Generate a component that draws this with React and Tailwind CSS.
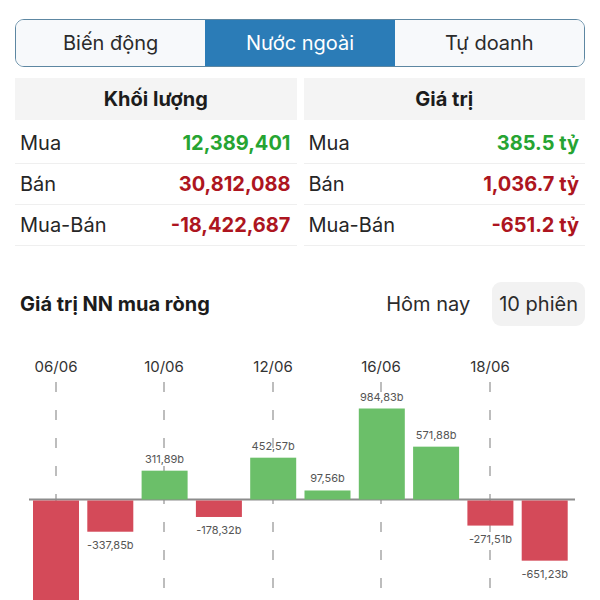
import React from 'react'

const tabs = ['Biến động', 'Nước ngoài', 'Tự doanh']

const volume = [
  { label: 'Mua', value: '12,389,401', color: 'text-[#26a432]' },
  { label: 'Bán', value: '30,812,088', color: 'text-[#ad1520]' },
  { label: 'Mua-Bán', value: '-18,422,687', color: 'text-[#ad1520]' },
]

const amount = [
  { label: 'Mua', value: '385.5 tỷ', color: 'text-[#26a432]' },
  { label: 'Bán', value: '1,036.7 tỷ', color: 'text-[#ad1520]' },
  { label: 'Mua-Bán', value: '-651.2 tỷ', color: 'text-[#ad1520]' },
]

const bars = [
  { v: -1300, label: '' },
  { v: -337.85, label: '-337,85b' },
  { v: 311.89, label: '311,89b' },
  { v: -178.32, label: '-178,32b' },
  { v: 452.57, label: '452,57b' },
  { v: 97.56, label: '97,56b' },
  { v: 984.83, label: '984,83b' },
  { v: 571.88, label: '571,88b' },
  { v: -271.51, label: '-271,51b' },
  { v: -651.23, label: '-651,23b' },
]

const dates = [
  { x: 56, d: '06/06' },
  { x: 164, d: '10/06' },
  { x: 273, d: '12/06' },
  { x: 381, d: '16/06' },
  { x: 490, d: '18/06' },
]

const ZERO = 499.5
const SCALE = 0.0924

function StatTable({ title, rows }) {
  return (
    <div className="flex flex-col">
      <div className="h-[42px] bg-[#f4f4f4] flex items-center justify-center text-[20px] font-bold text-[#1c1c1c]">
        {title}
      </div>
      <div className="pt-[3px]">
        {rows.map(r => (
          <div key={r.label} className="h-[41px] border-b border-[#efefef] flex items-center justify-between pl-[5px] pr-[6px]">
            <span className="text-[20px] text-[#262626]">{r.label}</span>
            <span className={`text-[20px] font-bold ${r.color}`}>{r.value}</span>
          </div>
        ))}
      </div>
    </div>
  )
}

function Chart() {
  return (
    <svg width="600" height="274" viewBox="0 326 600 274" className="block" style={{ fontFamily: 'Inter, sans-serif' }}>
      {dates.map(d => (
        <g key={d.d}>
          <text x={d.x} y={372} textAnchor="middle" fontSize="15" fill="#333">{d.d}</text>
          <line x1={d.x} y1={382} x2={d.x} y2={600} stroke="#a8a8a8" strokeWidth="1.5" strokeDasharray="10 18" />
        </g>
      ))}
      <line x1="29" y1={ZERO} x2="575" y2={ZERO} stroke="#8c8c8c" strokeWidth="2" />
      {bars.map((b, i) => {
        const x = 33 + i * 54.3
        const h = Math.abs(b.v) * SCALE
        const pos = b.v > 0
        const y = pos ? ZERO - h : ZERO + 1
        return (
          <g key={i}>
            <rect x={x} y={y} width="46" height={h} fill={pos ? '#6bbf69' : '#d44a59'} />
            {b.label && (
              <text x={x + 23} y={pos ? y - 8 : y + h + 17} textAnchor="middle" fontSize="11" fill="#555">
                {b.label}
              </text>
            )}
          </g>
        )
      })}
    </svg>
  )
}

export default function App() {
  return (
    <div className="w-[600px] h-[600px] overflow-hidden bg-white font-['Inter',sans-serif]">
      <div className="px-[15px] pt-[19px]">
        <div className="flex h-[48px] border border-[#5d87a2] rounded-[9px] overflow-hidden">
          {tabs.map((t, i) => (
            <div
              key={t}
              className={`flex-1 flex items-center justify-center text-[20px] ${i === 1 ? 'bg-[#2b7cb7] text-white' : 'bg-[#f7f9fb] text-[#2b2b2b]'}`}
            >
              {t}
            </div>
          ))}
        </div>

        <div className="grid grid-cols-2 gap-[7px] mt-[11px]">
          <StatTable title="Khối lượng" rows={volume} />
          <StatTable title="Giá trị" rows={amount} />
        </div>

        <div className="flex items-center justify-between mt-[36px] h-[44px]">
          <h2 className="pl-[5px] text-[20px] font-bold text-[#1c1c1c]">Giá trị NN mua ròng</h2>
          <div className="flex items-center">
            <span className="text-[20px] text-[#2b2b2b] mr-[22px]">Hôm nay</span>
            <button className="h-[44px] px-[7px] rounded-[9px] bg-[#f2f2f2] text-[20px] text-[#2b2b2b]">10 phiên</button>
          </div>
        </div>
      </div>
      <Chart />
    </div>
  )
}
